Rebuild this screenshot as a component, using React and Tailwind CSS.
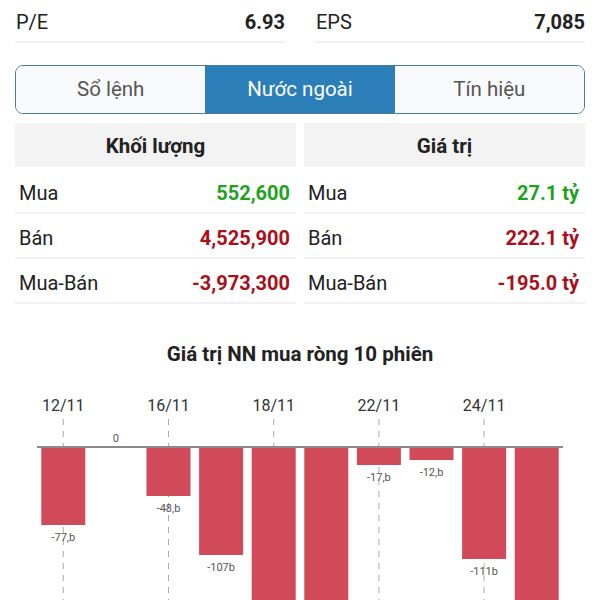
import React from 'react'

const stats = [
  { label: 'P/E', value: '6.93' },
  { label: 'EPS', value: '7,085' },
]

const tabs = ['Sổ lệnh', 'Nước ngoài', 'Tín hiệu']

const tables = [
  {
    title: 'Khối lượng',
    rows: [
      { label: 'Mua', value: '552,600', up: true },
      { label: 'Bán', value: '4,525,900' },
      { label: 'Mua-Bán', value: '-3,973,300' },
    ],
  },
  {
    title: 'Giá trị',
    rows: [
      { label: 'Mua', value: '27.1 tỷ', up: true },
      { label: 'Bán', value: '222.1 tỷ' },
      { label: 'Mua-Bán', value: '-195.0 tỷ' },
    ],
  },
]

// net foreign value per session (billions), scaled 1px per unit
const bars = [
  { v: 77, label: '-77,b', date: '12/11' },
  { v: 0, label: '0' },
  { v: 48, label: '-48,b', date: '16/11' },
  { v: 107, label: '-107b' },
  { v: 240, label: '', date: '18/11' },
  { v: 260, label: '' },
  { v: 17, label: '-17,b', date: '22/11' },
  { v: 12, label: '-12,b' },
  { v: 111, label: '-111b', date: '24/11' },
  { v: 250, label: '' },
]

function Chart() {
  const left = 37
  const band = 52.6
  const base = 67
  return (
    <svg width="600" height="220" className="block" style={{ fontFamily: 'Roboto, sans-serif' }}>
      {bars.map((b, i) =>
        b.date ? (
          <g key={'d' + i}>
            <text x={left + band * i + band / 2} y="30" textAnchor="middle" fontSize="16" fill="#333">{b.date}</text>
            <line x1={left + band * i + band / 2} x2={left + band * i + band / 2} y1="38" y2="220" stroke="#aaa" strokeWidth="1" strokeDasharray="6 6" />
          </g>
        ) : null
      )}
      {bars.map((b, i) => {
        const x = left + band * i + 4.3
        return (
          <g key={'b' + i}>
            {b.v > 0 && <rect x={x} y={base} width="44" height={b.v} fill="#d04a5a" />}
            {b.label && (
              <text x={x + 22} y={b.v > 0 ? base + b.v + 16 : base - 6} textAnchor="middle" fontSize="11" fill="#555">{b.label}</text>
            )}
          </g>
        )
      })}
      <line x1={left} x2="563" y1={base - 1} y2={base - 1} stroke="#8a8a8a" strokeWidth="2" />
    </svg>
  )
}

export default function App() {
  return (
    <div className="w-[600px] h-[600px] overflow-hidden bg-white font-['Roboto',sans-serif] text-[#222]">
      <div className="px-[15px]">
        <div className="grid grid-cols-2 gap-[30px]">
          {stats.map(s => (
            <div key={s.label} className="flex items-center justify-between h-[43px] pt-[3px] border-b-2 border-[#f0f0f0] text-[20px]">
              <span className="pl-px">{s.label}</span>
              <span className="font-bold">{s.value}</span>
            </div>
          ))}
        </div>

        <div className="mt-[22px] flex h-[49px] rounded-lg border border-[#4f7c99] overflow-hidden">
          {tabs.map((t, i) => (
            <div
              key={t}
              className={i === 1
                ? 'flex-1 flex items-center justify-center bg-[#2c7eb9] text-white text-[20.5px]'
                : 'flex-1 flex items-center justify-center bg-[#f8f9fa] text-[#555] text-[20.5px]'}
            >
              {t}
            </div>
          ))}
        </div>

        <div className="mt-[9px] grid grid-cols-2 gap-2">
          {tables.map(tb => (
            <div key={tb.title}>
              <div className="h-[44px] pt-[2px] bg-[#f3f3f3] flex items-center justify-center font-bold text-[20.5px]">{tb.title}</div>
              <div className="mt-[2px]">
                {tb.rows.map(r => (
                  <div key={r.label} className="flex items-center justify-between h-[45px] pt-[4px] border-b-2 border-[#f2f2f2] pl-[4px] pr-[6px] text-[20px]">
                    <span>{r.label}</span>
                    <span className={r.up ? 'font-bold text-[#1fa31f]' : 'font-bold text-[#a8101a]'}>{r.value}</span>
                  </div>
                ))}
              </div>
            </div>
          ))}
        </div>

        <h2 className="mt-[36px] h-[28px] flex items-center justify-center font-bold text-[20.5px] text-[#222]">
          Giá trị NN mua ròng 10 phiên
        </h2>
      </div>
      <div className="mt-[13px]">
        <Chart />
      </div>
    </div>
  )
}
